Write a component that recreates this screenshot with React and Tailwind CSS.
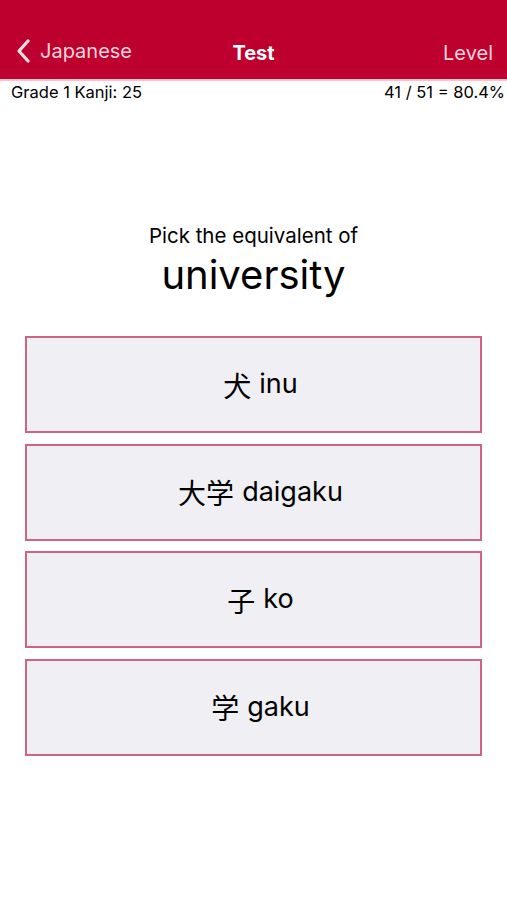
const choices = [
  { kanji: '犬', romaji: 'inu' },
  { kanji: '大学', romaji: 'daigaku' },
  { kanji: '子', romaji: 'ko' },
  { kanji: '学', romaji: 'gaku' },
]

function Choice({ kanji, romaji }) {
  return (
    <button className="h-[97px] w-full bg-[#efeff4] border-2 border-[#cd6483] flex items-center justify-center pl-[14px] text-[27px] text-black">
      <span className="font-['Noto_Sans_CJK_JP'] text-[28px]">{kanji}</span>
      <span className="ml-[8px]">{romaji}</span>
    </button>
  )
}

export default function App() {
  return (
    <div className="w-[507px] h-[900px] bg-white font-['Inter','Noto_Sans_CJK_JP',sans-serif] text-black">
      <div className="h-[79px] bg-[#bd002e] text-white flex items-end pb-[16px] pl-[16px] pr-[14px] relative">
        <div className="flex items-center gap-[10px] text-[#f8d5dd]">
          <svg width="14" height="24" viewBox="0 0 14 24" fill="none">
            <path d="M12 2 L3 12 L12 22" stroke="#f8e0e6" strokeWidth="3.2" strokeLinecap="round" strokeLinejoin="round" />
          </svg>
          <span className="text-[20px] leading-none">Japanese</span>
        </div>
        <div className="absolute left-0 right-0 bottom-[16px] text-center text-[20px] font-bold leading-none pointer-events-none">Test</div>
        <div className="ml-auto text-[20px] leading-none text-[#f8d5dd]">Level</div>
      </div>
      <div className="h-[2px] bg-[#f3c4cf]" />
      <div className="flex justify-between pl-[11px] pr-[2px] text-[16.5px] leading-[22px]">
        <span>Grade 1 Kanji: 25</span>
        <span>41 / 51 = 80.4%</span>
      </div>
      <div className="pt-[120px] text-center">
        <div className="text-[20.5px] leading-[26px]">Pick the equivalent of</div>
        <div className="text-[40px] leading-[52px]">university</div>
      </div>
      <div className="mt-[35px] px-[25px] flex flex-col gap-[10.5px]">
        {choices.map((c) => (
          <Choice key={c.romaji} {...c} />
        ))}
      </div>
    </div>
  )
}
